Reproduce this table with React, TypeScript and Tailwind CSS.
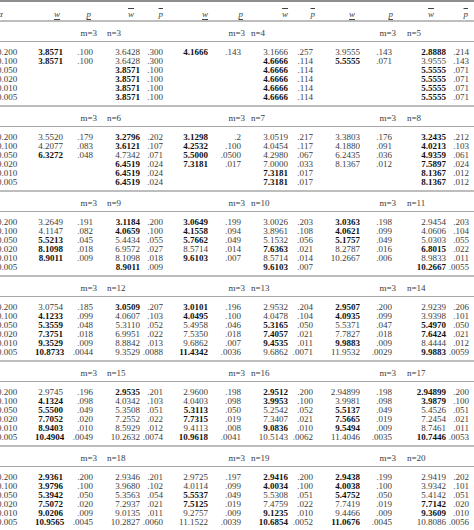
type Group = { n: number; w: string[]; p: string[]; wb: string[]; pb: string[] };

// "*" prefix marks a bold (significant) entry
const blocks: Group[][] = [
  [
    { n: 3, w: ["*3.8571", "*3.8571", "", "", "", ""], p: [".100", ".100", "", "", "", ""], wb: ["3.6428", "3.6428", "*3.8571", "*3.8571", "*3.8571", "*3.8571"], pb: [".300", ".300", ".100", ".100", ".100", ".100"] },
    { n: 4, w: ["*4.1666", "", "", "", "", ""], p: [".143", "", "", "", "", ""], wb: ["3.1666", "*4.6666", "*4.6666", "*4.6666", "*4.6666", "*4.6666"], pb: [".257", ".114", ".114", ".114", ".114", ".114"] },
    { n: 5, w: ["3.9555", "*5.5555", "", "", "", ""], p: [".143", ".071", "", "", "", ""], wb: ["*2.8888", "3.9555", "*5.5555", "*5.5555", "*5.5555", "*5.5555"], pb: [".214", ".143", ".071", ".071", ".071", ".071"] },
  ],
  [
    { n: 6, w: ["3.5520", "4.2077", "*6.3272", "", "", ""], p: [".179", ".083", ".048", "", "", ""], wb: ["*3.2796", "*3.6121", "4.7342", "*6.4519", "*6.4519", "*6.4519"], pb: [".202", ".107", ".071", ".024", ".024", ".024"] },
    { n: 7, w: ["*3.1298", "*4.2532", "*5.5000", "*7.3181", "", ""], p: [".2", ".100", ".0500", ".017", "", ""], wb: ["3.0519", "4.0454", "4.2980", "7.0000", "*7.3181", "*7.3181"], pb: [".217", ".117", ".067", ".033", ".017", ".017"] },
    { n: 8, w: ["3.3803", "4.1880", "6.2435", "8.1367", "", ""], p: [".176", ".091", ".036", ".012", "", ""], wb: ["*3.2435", "*4.0213", "*4.9359", "*7.5897", "*8.1367", "*8.1367"], pb: [".212", ".103", ".061", ".024", ".012", ".012"] },
  ],
  [
    { n: 9, w: ["3.2649", "4.1147", "*5.5213", "*8.1098", "*8.9011", ""], p: [".191", ".082", ".045", ".018", ".009", ""], wb: ["*3.1184", "*4.0659", "5.4434", "6.9572", "8.1098", "*8.9011"], pb: [".200", ".100", ".055", ".027", ".018", ".009"] },
    { n: 10, w: ["*3.0649", "*4.1558", "*5.7662", "8.5714", "*9.6103", ""], p: [".199", ".094", ".049", ".014", ".007", ""], wb: ["3.0026", "3.8961", "5.1532", "*7.6363", "8.5714", "*9.6103"], pb: [".203", ".108", ".056", ".021", ".014", ".007"] },
    { n: 11, w: ["*3.0363", "*4.0621", "*5.1757", "8.2787", "10.2667", ""], p: [".198", ".099", ".049", ".016", ".006", ""], wb: ["2.9454", "4.0606", "5.0303", "*6.8015", "8.9833", "*10.2667"], pb: [".203", ".104", ".055", ".022", ".011", ".0055"] },
  ],
  [
    { n: 12, w: ["3.0754", "*4.1233", "*5.3559", "*7.3751", "*9.3529", "*10.8733"], p: [".185", ".099", ".048", ".018", ".009", ".0044"], wb: ["*3.0509", "4.0607", "5.3110", "6.9951", "8.8842", "9.3529"], pb: [".207", ".103", ".052", ".022", ".013", ".0088"] },
    { n: 13, w: ["*3.0101", "*4.0495", "5.4958", "7.5350", "9.6862", "*11.4342"], p: [".196", ".100", ".046", ".018", ".007", ".0036"], wb: ["2.9532", "4.0478", "*5.3165", "*7.4057", "*9.4535", "9.6862"], pb: [".204", ".104", ".050", ".021", ".011", ".0071"] },
    { n: 14, w: ["*2.9507", "*4.0935", "5.5371", "7.7827", "*9.9883", "11.9532"], p: [".200", ".099", ".047", ".018", ".009", ".0029"], wb: ["2.9239", "3.9398", "*5.4970", "*7.6424", "8.4444", "*9.9883"], pb: [".206", ".101", ".050", ".021", ".012", ".0059"] },
  ],
  [
    { n: 15, w: ["2.9745", "*4.1324", "*5.5500", "*7.7052", "*8.9403", "*10.4904"], p: [".196", ".098", ".049", ".020", ".010", ".0049"], wb: ["*2.9535", "4.0342", "5.3508", "7.2552", "8.5929", "10.2632"], pb: [".201", ".103", ".051", ".022", ".012", ".0074"] },
    { n: 16, w: ["2.9600", "4.0403", "*5.3113", "*7.7315", "9.4113", "*10.9618"], p: [".198", ".098", ".050", ".019", ".008", ".0041"], wb: ["*2.9512", "*3.9953", "5.2542", "7.3407", "*9.0836", "10.5143"], pb: [".200", ".100", ".052", ".021", ".010", ".0062"] },
    { n: 17, w: ["2.94899", "3.9981", "*5.5137", "*7.5665", "*9.5494", "11.4046"], p: [".198", ".098", ".049", ".019", ".009", ".0035"], wb: ["*2.94899", "*3.9879", "5.4526", "7.2454", "8.7461", "*10.7446"], pb: [".200", ".100", ".051", ".021", ".011", ".0053"] },
  ],
  [
    { n: 18, w: ["*2.9361", "*3.9796", "*5.3942", "*7.5072", "*9.0206", "*10.9565"], p: [".200", ".100", ".050", ".020", ".009", ".0045"], wb: ["2.9346", "3.9680", "5.3563", "7.2937", "9.0135", "10.2827"], pb: [".201", ".102", ".054", ".021", ".011", ".0060"] },
    { n: 19, w: ["2.9725", "4.0114", "*5.5537", "*7.5125", "9.2757", "11.1522"], p: [".197", ".099", ".049", ".019", ".009", ".0039"], wb: ["*2.9416", "*4.0034", "5.5308", "7.4759", "*9.1235", "*10.6854"], pb: [".200", ".100", ".051", ".022", ".010", ".0052"] },
    { n: 20, w: ["*2.9438", "*4.0038", "*5.4752", "7.7419", "9.4466", "*11.0676"], p: [".199", ".100", ".050", ".019", ".009", ".0045"], wb: ["2.9419", "3.9342", "5.4142", "*7.7142", "*9.3609", "10.8086"], pb: [".202", ".101", ".051", ".020", ".010", ".0056"] },
  ],
];

const alphas = ["0.200", "0.100", "0.050", "0.020", "0.010", "0.005"];

const GRID =
  "grid grid-cols-[35px_28px_30px_47px_23px_45px_33px_47px_25px_47px_32px_54px_23px_5px]";

// n= label offset inside each group's w-bar column
const nPad = ["pl-[14px]", "pl-[10px]", "pl-[15px]"];

function Num({ v }: { v: string }) {
  if (!v) return <div />;
  const bold = v.startsWith("*");
  return (
    <div className={`text-right whitespace-nowrap ${bold ? "font-bold text-[#111]" : "text-[#3c3c3c]"}`}>
      {bold ? v.slice(1) : v}
    </div>
  );
}

function Head({ ch, line, cls }: { ch: string; line: "under" | "over"; cls: string }) {
  return (
    <div className="flex justify-end">
      <span
        className={`italic ${cls} ${
          line === "under" ? "underline underline-offset-[2px]" : "overline"
        } decoration-[0.5px] decoration-[#444]`}
      >
        {ch}
      </span>
    </div>
  );
}

function Block({ groups }: { groups: Group[] }) {
  return (
    <div className="border-t-2 border-[#bdbdbd]">
      <div className={`${GRID} h-[20px] border-b border-[#a8a8a8] pt-[7px] leading-[9px] text-[#3c3c3c]`}>
        <div />
        {groups.map((g, i) => (
          <div key={g.n} className="contents">
            <div />
            <div className="flex justify-end">
              <span className="-mr-[4px]">m=3</span>
            </div>
            <div className={`${nPad[i]} whitespace-nowrap`}>n={g.n}</div>
            <div />
          </div>
        ))}
        <div />
      </div>
      <div className="pt-[6px] pb-[3px]">
        {alphas.map((a, r) => (
          <div key={a} className={`${GRID} h-[9px] leading-[9px]`}>
            <div className="-ml-[3px] text-[#3c3c3c]">{a}</div>
            {groups.map((g) => (
              <div key={g.n} className="contents">
                <Num v={g.w[r]} />
                <Num v={g.p[r]} />
                <Num v={g.wb[r]} />
                <Num v={g.pb[r]} />
              </div>
            ))}
            <div />
          </div>
        ))}
      </div>
    </div>
  );
}

export default function App() {
  return (
    <div
      className="h-[530px] w-[474px] overflow-hidden bg-white text-[9px]"
      style={{ fontFamily: '"Liberation Serif", "Times New Roman", serif' }}
    >
      <div className="border-t-2 border-[#8e8e8e]">
        <div className={`${GRID} h-[18px] pt-[8px] leading-[9px] text-[#444]`}>
          <div className="-ml-[2px] italic">α</div>
          <Head ch="w" line="under" cls="mr-[3px]" />
          <Head ch="p" line="under" cls="mr-[2px]" />
          <Head ch="w" line="over" cls="mr-[6px]" />
          <Head ch="p" line="over" cls="mr-0" />
          <Head ch="w" line="under" cls="mr-0" />
          <Head ch="p" line="under" cls="-mr-[2px]" />
          <Head ch="w" line="over" cls="mr-0" />
          <Head ch="p" line="over" cls="-mr-[2px]" />
          <Head ch="w" line="under" cls="mr-[5px]" />
          <Head ch="p" line="under" cls="-mr-[1px]" />
          <Head ch="w" line="over" cls="mr-[12px]" />
          <Head ch="p" line="over" cls="mr-[1px]" />
          <div />
        </div>
      </div>
      {blocks.map((b, i) => (
        <Block key={i} groups={b} />
      ))}
    </div>
  );
}
